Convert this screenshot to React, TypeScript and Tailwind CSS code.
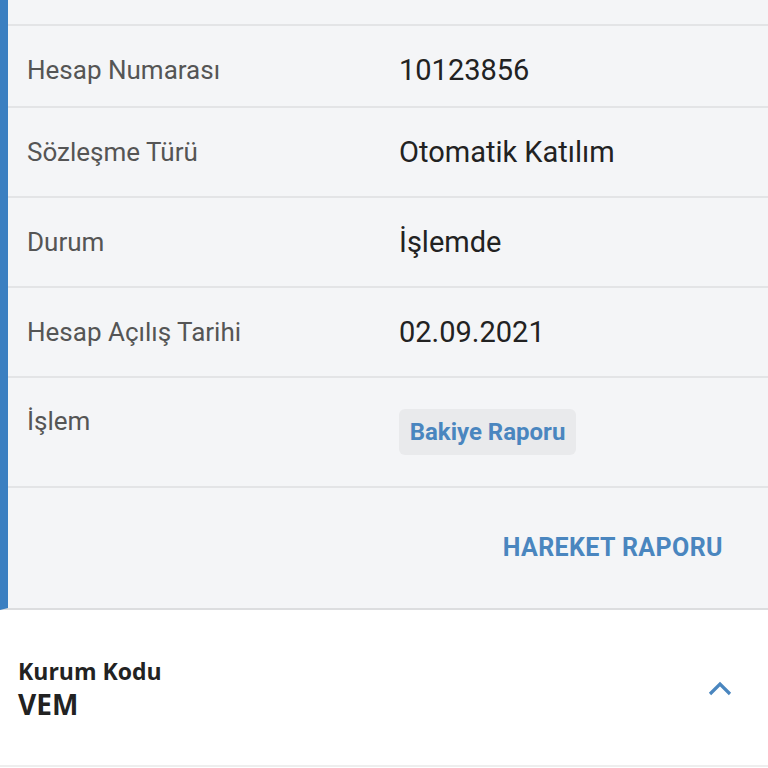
import React from "react";

const rows = [
  { label: "Hesap Numarası", value: "10123856", h: "h-[82px]" },
  { label: "Sözleşme Türü", value: "Otomatik Katılım", h: "h-[90px]" },
  { label: "Durum", value: "İşlemde", h: "h-[90px]" },
  { label: "Hesap Açılış Tarihi", value: "02.09.2021", h: "h-[90px]" },
];

const App = () => {
  return (
    <main className="w-[768px] h-[768px] overflow-hidden bg-white font-['Roboto',sans-serif]">
      <section className="border-l-8 border-[#3b7fc1] bg-[#f4f5f7] border-b-2 border-b-[#dcdddf]">
        <div className="h-[26px] border-b-2 border-[#e3e4e6]" />
        {rows.map((r) => (
          <div key={r.label} className={`flex ${r.h} pt-[26px] pl-[19px] border-b-2 border-[#e3e4e6]`}>
            <span className="w-[372px] text-[26px] leading-[36px] text-[#555555]">{r.label}</span>
            <span className="text-[29px] leading-[36px] text-[#222222]">{r.value}</span>
          </div>
        ))}
        <div className="flex h-[110px] pt-[25px] pl-[19px] border-b-2 border-[#e3e4e6]">
          <span className="w-[372px] text-[26px] leading-[36px] text-[#555555]">İşlem</span>
          <div className="pt-[6px]">
            <button className="h-[46px] w-[177px] rounded-md bg-[#e9eaec] text-[24px] font-bold text-[#4a86bf]">
              Bakiye Raporu
            </button>
          </div>
        </div>
        <div className="flex h-[120px] items-center justify-end pr-[45px]">
          <button className="text-[25px] font-bold text-[#4a86bf] tracking-[0.4px]">HAREKET RAPORU</button>
        </div>
      </section>
      <section className="flex h-[157px] items-center justify-between pl-[18px] pr-[34px] border-b-2 border-[#eeeeee]">
        <div className="font-['Open_Sans',sans-serif] text-[#222222] font-bold">
          <div className="text-[23px] leading-[32px]">Kurum Kodu</div>
          <div className="text-[28px] leading-[34px]">VEM</div>
        </div>
        <svg width="28" height="18" viewBox="0 0 28 18" fill="none">
          <path d="M4 15 L14 5 L24 15" stroke="#4a86bf" strokeWidth="3.2" />
        </svg>
      </section>
    </main>
  );
};

export default App;
